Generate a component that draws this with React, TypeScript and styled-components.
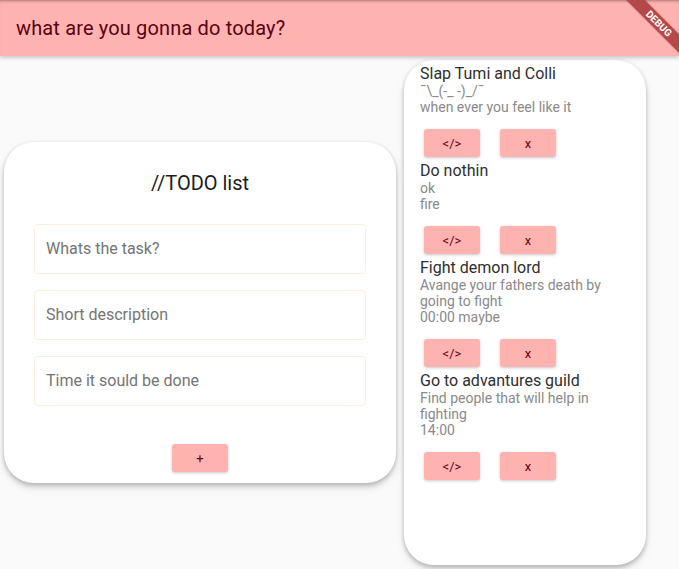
import React from "react";
import styled, { createGlobalStyle } from "styled-components";

const Global = createGlobalStyle`
  html, body { margin: 0; padding: 0; background: #fafafa; }
  body { font-family: Roboto, "Noto Sans", "Liberation Sans", sans-serif; }
  #root { height: 569px; overflow: hidden; }
  * { box-sizing: border-box; }
`;

const Page = styled.div`
  position: relative;
  height: 569px;
  display: flex;
  flex-direction: column;
  overflow: hidden;
`;

const AppBar = styled.header`
  height: 56px;
  flex: 0 0 56px;
  background: #ffb3b0;
  display: flex;
  align-items: center;
  padding: 0 16px;
  box-shadow: 0 2px 4px rgba(0, 0, 0, 0.2), inset 0 3px 3px -2px rgba(0, 0, 0, 0.35);
  position: relative;
  z-index: 2;
`;

const AppTitle = styled.h1`
  margin: 0;
  font-size: 20px;
  font-weight: 400;
  color: #5c0012;
  letter-spacing: 0.15px;
`;

const Body = styled.main`
  flex: 1;
  display: flex;
  align-items: center;
`;

const Card = styled.section<{ $w: number }>`
  width: ${(p) => p.$w}px;
  margin: 4px;
  background: #fff;
  border-radius: 30px;
  box-shadow: 0 3px 4px rgba(0, 0, 0, 0.16), 0 5px 9px rgba(0, 0, 0, 0.1),
    0 0 4px rgba(0, 0, 0, 0.08);
`;

const FormCard = styled(Card)`
  padding: 29px 30px 11px;
  display: flex;
  flex-direction: column;
  align-items: stretch;
`;

const FormTitle = styled.h2`
  margin: 0 0 29px;
  text-align: center;
  font-size: 20px;
  line-height: 24px;
  font-weight: 400;
  color: #1c1c1c;
`;

const Field = styled.input`
  height: 50px;
  margin-bottom: 16px;
  border: 1px solid #ffeedd;
  border-radius: 4px;
  padding: 0 11px 2px;
  font-family: inherit;
  font-size: 16px;
  color: #222;
  background: #fff;
  outline: none;
  &::placeholder { color: #747474; }
`;

const AddRow = styled.div`
  display: flex;
  justify-content: center;
  margin-top: 22px;
`;

const PinkButton = styled.button`
  width: 56px;
  height: 28px;
  border: none;
  border-radius: 3px;
  background: #ffb3b0;
  color: #6a0010;
  font-family: inherit;
  font-size: 13px;
  font-weight: 400;
  padding: 0;
  box-shadow: 0 1px 3px rgba(0, 0, 0, 0.22);
  cursor: pointer;
`;

const ListCard = styled(Card)`
  align-self: stretch;
  padding: 4px 16px;
`;

const Item = styled.article`
  display: flex;
  flex-direction: column;
`;

const ItemTitle = styled.div`
  font-size: 16px;
  line-height: 19px;
  color: #2e2e2e;
`;

const ItemText = styled.div`
  font-size: 14px;
  line-height: 16px;
  color: #8a8a8a;
`;

const Actions = styled.div`
  display: flex;
  gap: 20px;
  padding: 14px 4px 4px;
`;

const Ribbon = styled.div`
  position: absolute;
  top: 17px;
  left: 597px;
  width: 124px;
  height: 13px;
  background: #b54848;
  transform: rotate(45deg);
  color: #fff;
  font-size: 10px;
  font-weight: 700;
  line-height: 13px;
  text-align: center;
  z-index: 5;
  box-shadow: 0 0 2px rgba(0, 0, 0, 0.3);
`;

const todos = [
  { title: "Slap Tumi and Colli", lines: ["¯\\_(-_ -)_/¯", "when ever you feel like it"] },
  { title: "Do nothin", lines: ["ok", "fire"] },
  { title: "Fight demon lord", lines: ["Avange your fathers death by going to fight", "00:00 maybe"] },
  { title: "Go to advantures guild", lines: ["Find people that will help in fighting", "14:00"] },
];

export default function App() {
  return (
    <Page>
      <Global />
      <AppBar>
        <AppTitle>what are you gonna do today?</AppTitle>
      </AppBar>
      <Ribbon>DEBUG</Ribbon>
      <Body>
        <FormCard $w={392}>
          <FormTitle>//TODO list</FormTitle>
          <Field placeholder="Whats the task?" />
          <Field placeholder="Short description" />
          <Field placeholder="Time it sould be done" />
          <AddRow>
            <PinkButton>+</PinkButton>
          </AddRow>
        </FormCard>
        <ListCard $w={242}>
          {todos.map((t) => (
            <Item key={t.title}>
              <ItemTitle>{t.title}</ItemTitle>
              {t.lines.map((l) => (
                <ItemText key={l}>{l}</ItemText>
              ))}
              <Actions>
                <PinkButton>&lt;/&gt;</PinkButton>
                <PinkButton>x</PinkButton>
              </Actions>
            </Item>
          ))}
        </ListCard>
      </Body>
    </Page>
  );
}
